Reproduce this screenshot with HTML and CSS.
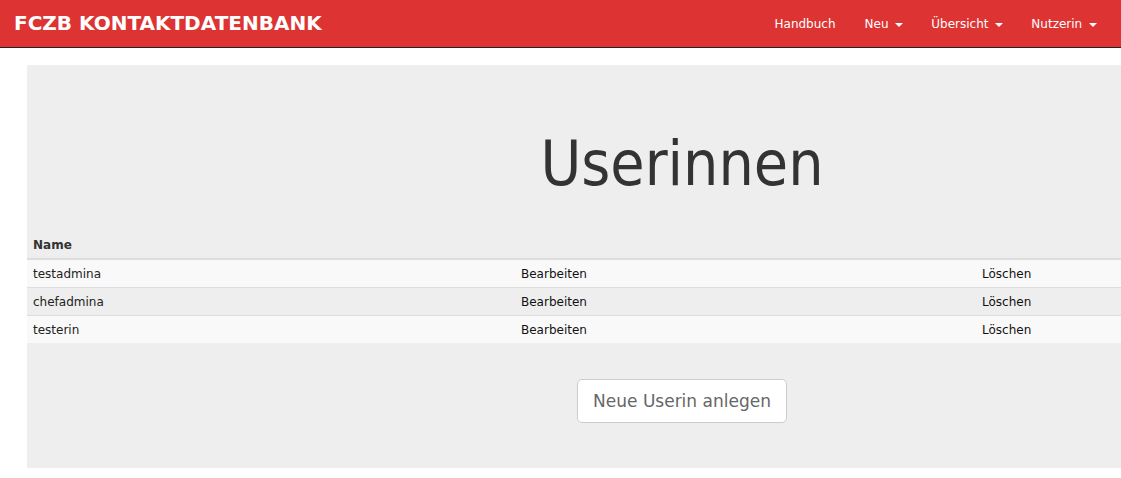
FILE: index.html
```html
<!DOCTYPE html>
<html lang="de">
<head>
<meta charset="utf-8">
<title>Userinnen</title>
<link rel="stylesheet" href="styles.css">
</head>
<body>
<nav class="navbar">
  <a class="brand" href="#">FCZB KONTAKTDATENBANK</a>
  <ul class="nav">
    <li><a href="#">Handbuch</a></li>
    <li><a href="#">Neu <span class="caret"></span></a></li>
    <li><a href="#">Übersicht <span class="caret"></span></a></li>
    <li><a href="#">Nutzerin <span class="caret"></span></a></li>
  </ul>
</nav>
<main class="jumbotron">
  <h1 class="title">Userinnen</h1>
  <table class="table">
    <colgroup><col class="c1"><col class="c2"><col class="c3"></colgroup>
    <thead><tr><th>Name</th><th></th><th></th></tr></thead>
    <tbody>
      <tr><td>testadmina</td><td><a href="#">Bearbeiten</a></td><td><a href="#">Löschen</a></td></tr>
      <tr><td>chefadmina</td><td><a href="#">Bearbeiten</a></td><td><a href="#">Löschen</a></td></tr>
      <tr><td>testerin</td><td><a href="#">Bearbeiten</a></td><td><a href="#">Löschen</a></td></tr>
    </tbody>
  </table>
  <div class="actions"><button class="btn">Neue Userin anlegen</button></div>
</main>
</body>
</html>
```
FILE: styles.css
```css
html, body { overflow-x: hidden; }
body {
  margin: 0;
  font-family: "DejaVu Sans", Verdana, sans-serif;
  font-size: 12px;
  color: #333;
  background: #fff;
}
.navbar {
  height: 47px;
  background: #dd3333;
  border-bottom: 1px solid #222;
  display: flex;
  align-items: center;
  justify-content: space-between;
  box-sizing: content-box;
}
.brand {
  color: #fff;
  text-decoration: none;
  font-weight: bold;
  font-size: 20px;
  padding-left: 14px;
  margin-top: -2px;
}
.nav {
  list-style: none;
  margin: 0;
  padding: 0 10px 0 0;
  display: flex;
}
.nav a {
  display: block;
  color: #fff;
  text-decoration: none;
  font-size: 12px;
  padding: 0 14px;
  line-height: 47px;
  margin-top: 2px;
}
.nav li:first-child a { padding-right: 15px; }
.caret {
  display: inline-block;
  width: 0;
  height: 0;
  margin-left: 3px;
  vertical-align: middle;
  border-top: 4px solid #fff;
  border-left: 4px solid transparent;
  border-right: 4px solid transparent;
}
.jumbotron {
  margin: 17px 0 0 27px;
  width: 1310px;
  height: 403px;
  background: #eeeeee;
  padding-top: 1px;
  box-sizing: border-box;
}
.title {
  margin: 58px 0 0;
  text-align: center;
  font-family: "DejaVu Sans Condensed", "DejaVu Sans", sans-serif;
  font-stretch: condensed;
  font-weight: normal;
  font-size: 62px;
  line-height: 80px;
  color: #333;
}
.table {
  width: 100%;
  margin-top: 27px;
  border-collapse: collapse;
  table-layout: fixed;
}
.c1 { width: 488px; }
.c2 { width: 461px; }
.table th, .table td {
  text-align: left;
  padding: 0 6px;
  height: 27px;
  font-size: 12px;
}
.table th {
  font-weight: bold;
  border-bottom: 2px solid #dddddd;
}
.table td {
  border-top: 1px solid #dddddd;
  color: #222;
}
.table td a { color: #111; text-decoration: none; }
.table tbody tr:nth-child(odd) { background: #f9f9f9; }
.actions {
  display: flex;
  justify-content: center;
  margin-top: 36px;
}
.btn {
  font-family: "DejaVu Sans", Verdana, sans-serif;
  font-size: 17px;
  color: #666;
  background: #fff;
  border: 1px solid #cccccc;
  border-radius: 5px;
  height: 44px;
  padding: 0 15px;
}
```
